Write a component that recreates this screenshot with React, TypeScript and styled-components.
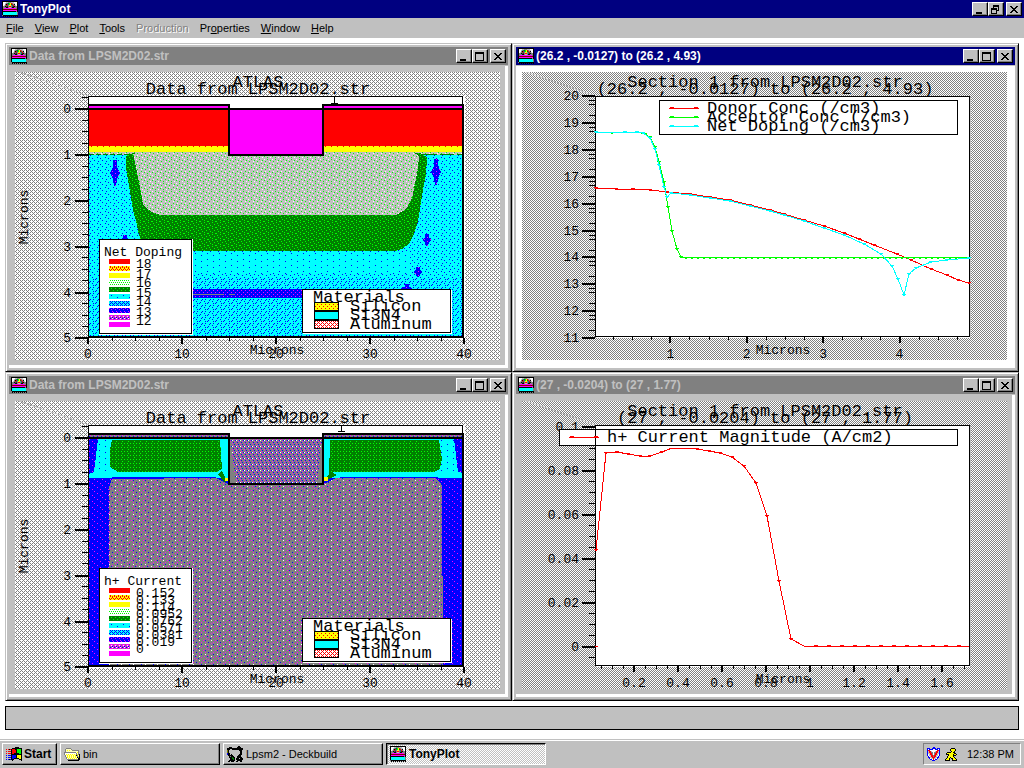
import React from "react";
import styled, { createGlobalStyle, css } from "styled-components";

const face = "#c0c0c0";
const shadow = "#808080";
const navy = "#000080";

const GlobalStyle = createGlobalStyle`
  * { box-sizing: border-box; }
  body {
    margin: 0;
    background: #fff;
    font: 11px/14px "Liberation Sans", Arial, sans-serif;
    color: #000;
  }
`;

const raised = css`
  border: 1px solid;
  border-color: #fff #000 #000 #fff;
  box-shadow: inset -1px -1px 0 ${shadow};
`;

const Desktop = styled.div`
  min-height: 100vh;
  display: flex;
  flex-direction: column;
`;

const Caption = styled.header<{ $active?: boolean }>`
  height: 18px;
  display: flex;
  align-items: center;
  gap: 2px;
  padding: 0 2px;
  background: ${(p) => (p.$active ? navy : shadow)};
  color: ${(p) => (p.$active ? "#fff" : face)};
`;

const CaptionText = styled.h1`
  flex: 1;
  margin: 0;
  font-size: 12px;
  line-height: 16px;
  font-weight: bold;
  white-space: nowrap;
  overflow: hidden;
`;

const CaptionButtons = styled.div`
  display: flex;
`;

const CaptionButton = styled.button`
  width: 16px;
  height: 14px;
  padding: 0;
  background: ${face};
  color: #000;
  ${raised}
  &:last-child { margin-left: 2px; }
  svg { display: block; }
`;

const MenuBar = styled.nav`
  height: 20px;
  display: flex;
  align-items: center;
  gap: 11px;
  padding: 0 6px;
  background: ${face};
`;

const MenuItem = styled.button`
  padding: 0;
  border: 0;
  background: none;
  font: inherit;
  color: #000;
  &:disabled {
    color: ${shadow};
    text-shadow: 1px 1px 0 #fff;
  }
`;

const Workspace = styled.main`
  flex: 1;
  padding: 5px 5px 10px;
`;

const WindowGrid = styled.div`
  display: grid;
  grid-template-columns: 1fr 1fr;
`;

const Frame = styled.section`
  min-width: 0;
  padding: 2px;
  background: ${face};
  border: 1px solid;
  border-color: ${face} #000 #000 ${face};
  box-shadow: inset 1px 1px 0 #fff, inset -1px -1px 0 ${shadow};
`;

const FrameInner = styled.div`
  padding: 1px;
`;

const Client = styled.div<{ $active?: boolean }>`
  margin-top: 1px;
  padding: 6px 5px 5px 6px;
  background: ${(p) => (p.$active ? "#fff" : face)};
  border: solid #fff;
  border-width: 0 3px 3px 0;
`;

const Chart = styled.svg`
  display: block;
  width: 100%;
  height: auto;
  font-family: "Liberation Mono", "Courier New", monospace;
  font-size: 13px;
  shape-rendering: crispEdges;
`;

const StatusBar = styled.footer`
  height: 24px;
  margin-top: 5px;
  border: 1px solid #000;
  background: ${face};
`;

const Taskbar = styled.footer`
  height: 28px;
  display: flex;
  align-items: flex-start;
  gap: 3px;
  padding: 2px 3px 2px 2px;
  background: ${face};
  border-top: 1px solid #fff;
  box-shadow: 0 -1px 0 ${face};
`;

const TaskButton = styled.button<{ $pressed?: boolean }>`
  flex: 0 1 160px;
  height: 22px;
  display: flex;
  align-items: center;
  gap: 3px;
  padding: 0 3px;
  font: inherit;
  white-space: nowrap;
  color: #000;
  background: ${face};
  ${raised}
  ${(p) =>
    p.$pressed &&
    css`
      font-size: 12px;
      font-weight: bold;
      background: repeating-conic-gradient(#fff 0 25%, ${face} 0 50%) 0 0 / 2px 2px;
      border-color: #000 #fff #fff #000;
      box-shadow: inset 1px 1px 0 ${shadow};
    `}
`;

const StartButton = styled(TaskButton)`
  flex: 0 0 55px;
  gap: 2px;
  font-size: 12px;
  font-weight: bold;
`;

const Tray = styled.div`
  height: 22px;
  display: flex;
  align-items: center;
  gap: 5px;
  margin-left: auto;
  padding: 0 6px 0 3px;
  border: 1px solid;
  border-color: ${shadow} #fff #fff ${shadow};
`;

const Clock = styled.time`
  margin-left: 5px;
  white-space: nowrap;
`;

const HiddenDefs = styled.svg`
  display: block;
  width: 0;
  height: 0;
`;

/* ---------- pixel art ---------- */

const palette: Record<string, string> = {
  k: "#000", w: "#fff", g: "#808080", s: "#c0c0c0", r: "#f00", d: "#800000",
  y: "#ff0", o: "#808000", c: "#0ff", t: "#008080", m: "#f0f", b: "#00f",
  n: "#000080", l: "#0f0", e: "#008000", a: "#ffffc0",
};

const Pixels = ({ rows }: { rows: string[] }) => (
  <>
    {rows.flatMap((row, y) =>
      [...row].map((ch, x) =>
        palette[ch] ? (
          <rect key={x + "-" + y} x={x} y={y} width="1" height="1" fill={palette[ch]} />
        ) : null
      )
    )}
  </>
);

const IconSvg = styled.svg`
  flex-shrink: 0;
`;

const Icon = ({ rows }: { rows: string[] }) => (
  <IconSvg
    width={rows[0].length}
    height={rows.length}
    shapeRendering="crispEdges"
    aria-hidden="true"
  >
    <Pixels rows={rows} />
  </IconSvg>
);

const plotIcon = [
  "kkkkkkkkkkkkkkkk",
  "kwwwssgggssswwwk",
  "kwwsgtelyrgsswwk",
  "kwwgkrtlyergkwwk",
  "kwsgrtgyygtrgswk",
  "kggktdgrrgtdkggk",
  "kgggkkgssgkkgggk",
  "kgmmmmmmmmmmmmgk",
  "kddddddddddddddk",
  "kmmmmmmmmmmmmmmk",
  "kkkkkkkkkkkkkkgk",
  "kccccccccccccccg",
  "kccccccccccccccg",
  "kccccccccccccccg",
  "gkkkkkkkkkkkkkkk",
  ".k.k.k.k.k.k.k.k",
];

const folderIcon = [
  "................",
  "..ggggg.........",
  ".gaaaaag........",
  ".gayayaaggggggg.",
  ".gaaaaaaaaaaaag.",
  "ggggggggggggayg.",
  "gwwwwwwwwwwwgag.",
  "gwyayayayayagygk",
  ".gayayayayaykgak",
  ".gwyayayayayagyk",
  "..gyayayayayakgk",
  "..gwyayayayayakk",
  "...gggggggggggkk",
  "....kkkkkkkkkkk.",
  "................",
];

const deckIcon = [
  "...........kk...",
  "..kkk.....kkkk..",
  "kkkkkkkkkkkkkkkk",
  "kkksskkkkkkkkkkk",
  "ok..........kkk.",
  "ok...........kk.",
  "ok...........kk.",
  "bkk..........kk.",
  "bkk.k.......kkk.",
  ".kkkkk.....kkk..",
  "..kgkkk...kkkk..",
  "..kkkekk..kkkkk.",
  "...kkeek.kkkskkk",
  "...kkkek.kkkkkkk",
  "..kkkkkk..kkkkk.",
  ".kkskkk..kksskk.",
];

const startIcon = [
  ".........kkkk...",
  "......kkkkkkkkkk",
  "r.rkrkrrrkkllllk",
  ".....krrrrkllllk",
  "r.rrrkrrrrkllllk",
  ".....krrrrkllllk",
  "r.rrrkrrkkkkkllk",
  ".....kkkkkkkkkkk",
  "b.bbbkbbbbkyyyyk",
  ".....kbbbbkyyyyk",
  "b.bbbkbbbbkyyyyk",
  ".....kbbkkkkkyyk",
  "b.bkbkkk.....kkk",
  "......k........k",
];

const shieldIcon = [
  "......bb.....",
  "bbb..bbbb.bbb",
  "bwbbbbwwbbbwb",
  "brrwwwwwwwrrb",
  "bsrrswwwsrrsb",
  "bsrrggwggrrsb",
  "bssrrgwgrrssb",
  "bwsrrgwgrrswb",
  "bwssrrgrrsswb",
  ".bwsrrgrrswb.",
  ".bbssrrrssbb.",
  "..bwssrsswb..",
  "...bbwrwbb...",
  ".....bbb.....",
];

const runnerIcon = [
  "......kkkk..",
  ".....kyyyyk.",
  ".....kyyyyk.",
  "......kyyk..",
  "..kkkkyykk..",
  ".kyyyyyyykk.",
  ".kkkyyyykyyk",
  "...kyyyykkk.",
  "..kyyyyyk...",
  "..kyykyyyk..",
  ".kyyk.kkyyk.",
  "kyyyk..kyyyk",
  "kkkkk..kkkkk",
];

/* Fill textures: each is a small repeating tile of palette pixels. */
const textures: Record<string, string[]> = {
  canvas: ["gwgw", "wgww", "gwgw", "wwwg"],
  canvasDense: ["gw", "wg"],
  aluminium: ["ssssssls", "slssswss", "ssssssss", "swssslss", "lsssssss", "ssslssws", "ssssssss", "wsslssss"],
  green: ["eeeeleee", "eleeeeee", "eeeeeele", "eeleeeee", "eeeeleee", "leeeeeel"],
  greenGrid: ["eeleee", "eeeeee", "eleele", "eeeeee"],
  cyanSparse: ["cccccccccccc", "cccbcccccccc", "cccccccccccc", "cccccccccbcc", "cccccccccccc", "cccccccccccc"],
  cyan: ["cccccccc", "cbcccccc", "ccccbccc", "cccccccc", "ccccccbc", "ccbccccc"],
  cyanDense: ["cbcccccc", "ccccbccc", "bccccccc", "cccccbcb", "cccccccc", "ccbccbcc"],
  blue: ["bbbbbb", "bmbbbb", "bbbbbb", "bbbbmb"],
  blueDense: ["bbbm", "bbbb", "bmbb", "bbbb"],
  blueSpeckle: ["bbbbbbmb", "bbbbbbbb", "bmbbbbbb", "bbbbbbbb", "bbbbmbbb", "bbbbbbbb"],
  mix: [
    "ggggmggggggg", "gbgggggwgggm", "gggggggggggg", "gmggbggggmgg",
    "gggggggmgggg", "gwgggggggbgg", "ggggmggggggg", "mggbgggwgggg",
    "gggggggggmgg", "ggmgggbggggg",
  ],
  purple: ["mggg", "ggbg", "gmgg", "wggb", "ggmg", "gbgg"],
  redYellow: ["ryyy", "yryr", "yyry", "ryry"],
  lime: ["lwlw", "wwww", "wlwl", "wwww"],
  darkGreen: ["eeel", "eeee", "elee", "eeee"],
  cyanBlue: ["cbcc", "bcbc", "cccb", "bcbc"],
  blueMagenta: ["bmbb", "bbbm", "bbbb", "mbbb"],
  grayMagenta: ["mgmw", "bmgm", "wmbg", "mgmm"],
  pink: ["rwww", "wrwr", "wwrw", "wrwr"],
  yellowDots: ["yryy", "yyyy", "yyyr", "yyyy"],
  yellowEdge: ["yryyyyyryyyy"],
};

const tex = (id: string) => `url(#${id})`;

const TextureDefs = () => (
  <HiddenDefs aria-hidden="true">
    <defs>
      {Object.entries(textures).map(([id, rows]) => (
        <pattern
          key={id}
          id={id}
          width={rows[0].length}
          height={rows.length}
          patternUnits="userSpaceOnUse"
          shapeRendering="crispEdges"
        >
          <Pixels rows={rows} />
        </pattern>
      ))}
    </defs>
  </HiddenDefs>
);

/* ---------- chart pieces ---------- */

type Tick = { at: number; label?: string };

const YAxis = ({ x, labelX, ticks }: { x: number; labelX: number; ticks: Tick[] }) => (
  <g>
    {ticks.map((t, i) => (
      <rect
        key={i}
        x={x - (t.label ? 13 : 6)}
        y={Math.round(t.at)}
        width={t.label ? 13 : 6}
        height={t.label ? 2 : 1}
      />
    ))}
    {ticks.map((t, i) =>
      t.label ? (
        <text key={i} x={labelX} y={Math.round(t.at) + 5} textAnchor="end">
          {t.label}
        </text>
      ) : null
    )}
  </g>
);

const XAxis = ({ y, ticks }: { y: number; ticks: Tick[] }) => (
  <g>
    {ticks.map((t, i) => (
      <rect
        key={i}
        x={Math.round(t.at) - (t.label ? 1 : 0)}
        y={y}
        width={t.label ? 2 : 1}
        height={t.label ? 6 : 3}
      />
    ))}
    {ticks.map((t, i) =>
      t.label ? (
        <text key={i} x={t.at} y={358} textAnchor="middle">
          {t.label}
        </text>
      ) : null
    )}
  </g>
);

const range = (n: number) => Array.from({ length: n }, (_, i) => i);

const Backdrop = ({ x, fill = "canvas" }: { x: number; fill?: string }) => (
  <>
    <rect x={x} y="72" width="485" height="288" fill={tex(fill)} />
    <line x1={x + 4} y1="72" x2={x + 74} y2="96" stroke={face} strokeWidth="1" />
  </>
);

const Heading = ({ x, lines }: { x: number; lines: [string, string] }) => (
  <g fontSize="17" textAnchor="middle">
    <text x={x} y="87">{lines[0]}</text>
    <text x={x} y="94">{lines[1]}</text>
  </g>
);

const levelFills = [
  "#f00", tex("redYellow"), "#ff0", tex("lime"), tex("darkGreen"),
  tex("cyanSparse"), tex("cyanBlue"), tex("blueMagenta"), tex("grayMagenta"), "#f0f",
];

const LevelLegend = ({ title, labels, step }: { title: string; labels: string[]; step: number }) => (
  <g>
    <rect x="99" y="239" width="94" height="96" fill="#fff" />
    <rect x="99.5" y="239.5" width="92" height="94" fill="#fff" stroke="#000" />
    <text x="104" y="256">{title}</text>
    {levelFills.map((fill, i) => (
      <rect key={i} x="109" y={259 + i * 7} width="21" height="5" fill={fill} />
    ))}
    {labels.map((label, i) => (
      <text key={label} x="136" y={Math.round(268 + i * step)}>{label}</text>
    ))}
  </g>
);

const MaterialLegend = () => (
  <g>
    <rect x="303" y="290" width="149" height="44" fill="#fff" />
    <rect x="302.5" y="289.5" width="148" height="43" fill="#fff" stroke="#000" />
    <rect x="314.5" y="302.5" width="24" height="8" fill={tex("yellowDots")} stroke="#000" />
    <rect x="314.5" y="311.5" width="24" height="8" fill="#0ff" stroke="#000" />
    <rect x="314.5" y="320.5" width="24" height="8" fill={tex("pink")} stroke="#000" />
    <g fontSize="17">
      <text x="313" y="302">Materials</text>
      <text x="350" y="311">Silicon</text>
      <text x="350" y="320">Si3N4</text>
      <text x="350" y="329">Aluminum</text>
    </g>
  </g>
);

const sectionY: Tick[] = range(22).map((i) => ({
  at: 97 + i * 11.45,
  label: i % 4 === 1 ? String((i - 1) / 4) : undefined,
}));
const sectionX: Tick[] = range(17).map((i) => ({
  at: 88 + i * 23.5,
  label: i % 4 === 0 ? String(i * 2.5) : undefined,
}));

const DeviceChart = ({
  label, marker, markerBase, children, legend,
}: {
  label: string;
  marker: number;
  markerBase: number;
  children: React.ReactNode;
  legend: React.ReactNode;
}) => (
  <Chart viewBox="15 72 485 288" role="img" aria-label={label}>
    <Backdrop x={15} />
    <rect x="88" y="96" width="377" height="243" fill="#fff" />
    {children}
    <rect x="88" y="96" width="375" height="1" />
    <rect x="88" y="96" width="1" height="242" />
    <rect x="462" y="96" width="1" height="12" />
    <rect x="462" y="104" width="2" height="234" />
    <rect x="88" y="336" width="376" height="2" />
    <rect x="88" y="104" width="142" height="2" />
    <rect x="322" y="104" width="142" height="2" />
    <rect x="76" y="108" width="388" height="2" />
    <rect x="228" y="104" width="2" height="52" />
    <rect x="322" y="104" width="2" height="52" />
    <rect x="228" y="154" width="96" height="2" />
    <rect x={marker} y="96" width="1" height="7" />
    <rect x={marker - 3} y={markerBase} width="7" height="1" />
    <YAxis x={88} labelX={71} ticks={sectionY} />
    <XAxis y={338} ticks={sectionX} />
    <text x="277" y="354" textAnchor="middle">Microns</text>
    <text transform="translate(28 217) rotate(-90)" textAnchor="middle">Microns</text>
    <Heading x={258} lines={["ATLAS", "Data from LPSM2D02.str"]} />
    {legend}
    <MaterialLegend />
  </Chart>
);

const Spot = ({ x, y, w, h }: { x: number; y: number; w: number; h: number }) => (
  <polygon
    points={`${x - w / 2},${y - h} ${x + w / 2},${y - h} ${x + 2},${y - h / 2} ${x + w},${y} ${x + 2},${y + h / 2} ${x + 1},${y + h} ${x - 1},${y + h} ${x - 2},${y + h / 2} ${x - w},${y} ${x - 2},${y - h / 2}`}
    fill={tex("blue")}
  />
);

const DopingChart = () => (
  <DeviceChart
    label="Net doping cross-section"
    marker={334}
    markerBase={103}
    legend={<LevelLegend title="Net Doping" labels={["18", "17", "16", "15", "14", "13", "12"]} step={9.5} />}
  >
    <rect x="88" y="105" width="141" height="4" fill="#f0f" />
    <rect x="323" y="105" width="140" height="4" fill="#f0f" />
    <rect x="89" y="109" width="374" height="38" fill="#f00" />
    <rect x="89" y="147" width="374" height="5" fill="#ff0" />
    <rect x="89" y="146" width="374" height="1" fill={tex("yellowEdge")} />
    <rect x="89" y="152" width="374" height="3" fill={tex("aluminium")} />
    <rect x="89" y="155" width="374" height="182" fill={tex("cyan")} />
    <rect x="140" y="252" width="270" height="22" fill={tex("cyanSparse")} />
    <rect x="89" y="277" width="374" height="60" fill={tex("cyanDense")} />
    <line x1="89" y1="154.5" x2="133" y2="154.5" stroke="#008000" strokeDasharray="5 2" />
    <line x1="423" y1="154.5" x2="463" y2="154.5" stroke="#008000" strokeDasharray="14 3" />
    <polygon
      points="126,156 133,153 420,153 427,157 426,175 423,190 418,221 414,234 409,244 402,249 395,251 150,251 142,243 139,235 136,221 133,210 128,180 126,168"
      fill={tex("green")}
    />
    <polygon
      points="133,154 140,152 413,152 419,156 418,168 415,184 412,198 408,206 403,211 396,215 160,215 152,212 145,207 143,205 140,187 136,167"
      fill={tex("aluminium")}
    />
    <rect x="229" y="109" width="94" height="46" fill="#f0f" />
    <rect x="192" y="289" width="112" height="9" fill={tex("blueDense")} />
    <rect x="193" y="294" width="31" height="1" fill={shadow} />
    <rect x="229" y="294" width="6" height="1" fill={shadow} />
    <Spot x={115} y={173} w={5} h={13} />
    <Spot x={436} y={172} w={5} h={13} />
    <Spot x={427} y={240} w={4} h={6} />
    <Spot x={418} y={272} w={4} h={5} />
    <Spot x={125} y={240} w={5} h={5} />
    <Spot x={407} y={289} w={6} h={5} />
  </DeviceChart>
);

const CurrentChart = () => (
  <DeviceChart
    label="Hole current cross-section"
    marker={341}
    markerBase={102}
    legend={
      <LevelLegend
        title="h+ Current"
        labels={["0.152", "0.133", "0.114", "0.0952", "0.0762", "0.0571", "0.0381", "0.019", "0"]}
        step={7}
      />
    }
  >
    <rect x="88" y="105" width="141" height="4" fill={tex("purple")} />
    <rect x="323" y="105" width="140" height="4" fill={tex("purple")} />
    <rect x="89" y="109" width="374" height="40" fill="#0ff" />
    <polygon points="98,110 111,110 109,143 94,143" fill={tex("cyanSparse")} />
    <polygon points="441,110 454,110 458,143 441,143" fill={tex("cyanSparse")} />
    <polygon points="89,110 98,110 94,143 89,145" fill={tex("blueSpeckle")} />
    <polygon points="454,110 463,110 463,144 458,143" fill={tex("blueSpeckle")} />
    <polygon points="112,111 220,111 222,140 217,143 118,143 110,138 110,120" fill={tex("greenGrid")} />
    <polygon points="330,111 439,111 442,130 440,140 434,143 334,143 329,147" fill={tex("greenGrid")} />
    <rect x="89" y="149" width="374" height="188" fill={tex("blueSpeckle")} />
    <polygon points="109,158 112,150 216,149 228,155 324,155 336,149 436,149 442,156 443,337 109,337" fill={tex("mix")} />
    <rect x="112" y="148" width="104" height="1" fill="#00f" />
    <rect x="340" y="148" width="98" height="1" fill="#00f" />
    <polygon points="218,145 222,142 227,152 224,153" fill="#008000" />
    <polygon points="333,144 337,146 327,151 324,149" fill="#008000" />
    <rect x="225" y="149" width="3" height="3" fill="#ff0" />
    <rect x="324" y="148" width="4" height="4" fill="#ff0" />
    <rect x="229" y="109" width="94" height="46" fill={shadow} />
    <polygon points="230,110 322,110 317,154 236,154" fill={tex("purple")} />
  </DeviceChart>
);

type Point = [number, number];

const Curve = ({ points, color, marks }: { points: Point[]; color: string; marks?: Point[] }) => (
  <g>
    <polyline points={points.map((p) => p.join(",")).join(" ")} fill="none" stroke={color} />
    {(marks ?? points).map(([x, y], i) => (
      <g key={i} fill={color}>
        <rect x={x - 2} y={y - 1} width="4" height="1" />
        <rect x={x - 1} y={y} width="2" height="1" />
      </g>
    ))}
  </g>
);

const PlotFrame = () => (
  <>
    <rect x="596" y="97" width="375" height="241" fill="#fff" />
    <rect x="970" y="97" width="1" height="241" fill={face} />
    <rect x="595.5" y="96.5" width="374" height="240" fill="#fff" stroke="#000" />
  </>
);

const LegendLine = ({ x, y, color, text }: { x: number; y: number; color: string; text: string }) => (
  <g>
    <rect x={x} y={y} width="30" height="1" fill={color} />
    <rect x={x + 1} y={y - 1} width="4" height="2" fill={color} />
    <rect x={x + 25} y={y - 1} width="4" height="2" fill={color} />
    <text x={x + 38} y={y + 5} fontSize="17">{text}</text>
  </g>
);

const donor: Point[] = [
  [596, 188], [616, 189], [633, 189], [650, 190], [667, 192], [690, 194], [710, 197], [730, 200],
  [750, 205], [770, 210], [784, 214], [804, 220], [824, 226], [844, 233], [859, 239], [874, 245],
  [897, 254], [911, 260], [931, 269], [947, 275], [958, 280], [969, 283],
];
const acceptor: Point[] = [
  [596, 132], [612, 133], [625, 132], [637, 132], [645, 134], [650, 137], [655, 147], [659, 162],
  [664, 182], [668, 207], [672, 231], [677, 249], [681, 257], [969, 257],
];
const net: Point[] = [
  [596, 132], [625, 132], [637, 132], [643, 133], [650, 138], [655, 149], [659, 165], [664, 187],
  [667, 197], [671, 193], [690, 195], [710, 198], [730, 201], [750, 206], [770, 211], [784, 215],
  [804, 221], [824, 228], [844, 235], [864, 244], [881, 254], [892, 266], [898, 279], [904, 295],
  [909, 274], [916, 268], [931, 262], [947, 260], [969, 258],
];
const acceptorMarks: Point[] = [
  ...acceptor.slice(0, 13),
  ...range(48).map((i): Point => [686 + i * 6, 258]),
];
const current: Point[] = [
  [596, 221], [606, 124], [617, 123], [628, 125], [640, 127], [650, 127], [662, 123], [672, 119],
  [687, 119], [697, 120], [709, 122], [720, 124], [732, 128], [744, 137], [756, 154], [767, 187],
  [779, 252], [791, 310], [804, 317], [969, 317],
];
const currentMarks: Point[] = [
  ...current.slice(0, 7),
  ...current.slice(9, 18),
  ...range(12).map((i): Point => [816 + i * 13, 317]),
];

const depthY: Tick[] = [
  ...range(10).map((i) => ({ at: 95 + i * 26.9, label: String(20 - i) })),
  ...range(9).flatMap((i) => [4, 8, 19].map((d) => ({ at: 96 + i * 26.9 + d }))),
];
const depthX: Tick[] = range(19).map((i) => ({
  at: 613 + i * 19.1,
  label: i % 4 === 3 ? String((i + 1) / 4) : undefined,
}));
const magnitudeY: Tick[] = range(22).map((i) => ({
  at: 97 + i * 11,
  label: i % 4 === 0 ? String((10 - i / 2) / 100) : undefined,
}));
const magnitudeX: Tick[] = range(34).map((i) => ({
  at: 601 + i * 11,
  label: i % 4 === 3 ? String(((i + 1) * 5) / 100) : undefined,
}));

const DepthChart = () => (
  <Chart viewBox="522 72 485 288" role="img" aria-label="Doping along cut line">
    <Backdrop x={522} fill="canvasDense" />
    <PlotFrame />
    <YAxis x={595} labelX={579} ticks={depthY} />
    <XAxis y={337} ticks={depthX} />
    <text x="783" y="354" textAnchor="middle">Microns</text>
    <Heading x={765} lines={["Section 1 from LPSM2D02.str", "(26.2 , -0.0127) to (26.2 , 4.93)"]} />
    <rect x="659.5" y="100.5" width="298" height="34" fill="#fff" stroke="#000" />
    <LegendLine x={669} y={108} color="#f00" text="Donor Conc (/cm3)" />
    <LegendLine x={669} y={117} color="#0f0" text="Acceptor Conc (/cm3)" />
    <LegendLine x={669} y={126} color="#0ff" text="Net Doping (/cm3)" />
    <Curve points={donor} color="#f00" />
    <Curve points={acceptor} marks={acceptorMarks} color="#0f0" />
    <Curve points={net} color="#0ff" />
  </Chart>
);

const MagnitudeChart = () => (
  <Chart viewBox="522 72 485 288" role="img" aria-label="Hole current magnitude along cut line">
    <Backdrop x={522} fill="canvasDense" />
    <YAxis x={595} labelX={579} ticks={magnitudeY} />
    <PlotFrame />
    <XAxis y={337} ticks={magnitudeX} />
    <text x="783" y="354" textAnchor="middle">Microns</text>
    <Heading x={765} lines={["Section 1 from LPSM2D02.str", "(27 , -0.0204) to (27 , 1.77)"]} />
    <rect x="559.5" y="100.5" width="398" height="16" fill="#fff" stroke="#000" />
    <rect x="595" y="100" width="1" height="16" />
    <LegendLine x={569} y={108} color="#f00" text="h+ Current Magnitude (A/cm2)" />
    <Curve points={current} marks={currentMarks} color="#f00" />
    <rect x="595" y="317" width="3" height="1" fill="#f00" />
  </Chart>
);

/* ---------- window chrome ---------- */

const glyphs = {
  minimize: ["............", "............", "............", "............", "............", "............", "............", "............", "...kkkkkk...", "...kkkkkk..."],
  maximize: ["............", "..kkkkkkkkk.", "..kkkkkkkkk.", "..k.......k.", "..k.......k.", "..k.......k.", "..k.......k.", "..k.......k.", "..k.......k.", "..kkkkkkkkk."],
  restore: ["............", "....kkkkkk..", "....kkkkkk..", "....k....k..", "..kkkkkk.k..", "..kkkkkk.k..", "..k....kkk..", "..k....k....", "..k....k....", "..kkkkkk...."],
  close: ["............", "............", "...kk....kk.", "....kk..kk..", ".....kkkk...", "......kk....", ".....kkkk...", "....kk..kk..", "...kk....kk.", "............"],
};

const Buttons = ({ middle = "maximize" }: { middle?: "maximize" | "restore" }) => (
  <CaptionButtons>
    {(["minimize", middle, "close"] as const).map((kind) => (
      <CaptionButton key={kind} aria-label={kind}>
        <Icon rows={glyphs[kind]} />
      </CaptionButton>
    ))}
  </CaptionButtons>
);

const ChildWindow = ({
  title, active, children,
}: {
  title: string;
  active?: boolean;
  children: React.ReactNode;
}) => (
  <Frame>
    <FrameInner>
      <Caption $active={active}>
        <Icon rows={plotIcon} />
        <CaptionText as="h2">{title}</CaptionText>
        <Buttons />
      </Caption>
      <Client $active={active}>{children}</Client>
    </FrameInner>
  </Frame>
);

const menus: [string, string, string, boolean?][] = [
  ["", "F", "ile"],
  ["", "V", "iew"],
  ["", "P", "lot"],
  ["", "T", "ools"],
  ["Production", "", "", true],
  ["Pr", "o", "perties"],
  ["", "W", "indow"],
  ["", "H", "elp"],
];

export default function App() {
  return (
    <Desktop>
      <GlobalStyle />
      <TextureDefs />
      <Caption $active>
        <Icon rows={plotIcon} />
        <CaptionText>TonyPlot</CaptionText>
        <Buttons middle="restore" />
      </Caption>
      <MenuBar>
        {menus.map(([before, key, after, disabled]) => (
          <MenuItem key={before + key + after} disabled={disabled}>
            {before}
            <u>{key}</u>
            {after}
          </MenuItem>
        ))}
      </MenuBar>
      <Workspace>
        <WindowGrid>
          <ChildWindow title="Data from LPSM2D02.str">
            <DopingChart />
          </ChildWindow>
          <ChildWindow title="(26.2 , -0.0127) to (26.2 , 4.93)" active>
            <DepthChart />
          </ChildWindow>
          <ChildWindow title="Data from LPSM2D02.str">
            <CurrentChart />
          </ChildWindow>
          <ChildWindow title="(27 , -0.0204) to (27 , 1.77)">
            <MagnitudeChart />
          </ChildWindow>
        </WindowGrid>
        <StatusBar />
      </Workspace>
      <Taskbar>
        <StartButton>
          <Icon rows={startIcon} />
          Start
        </StartButton>
        <TaskButton>
          <Icon rows={folderIcon} />
          bin
        </TaskButton>
        <TaskButton>
          <Icon rows={deckIcon} />
          Lpsm2 - Deckbuild
        </TaskButton>
        <TaskButton $pressed>
          <Icon rows={plotIcon} />
          TonyPlot
        </TaskButton>
        <Tray>
          <Icon rows={shieldIcon} />
          <Icon rows={runnerIcon} />
          <Clock>12:38 PM</Clock>
        </Tray>
      </Taskbar>
    </Desktop>
  );
}
